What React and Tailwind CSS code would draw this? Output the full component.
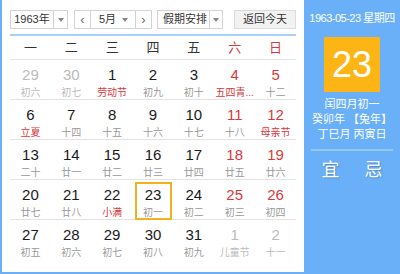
import React from 'react';

const weekdays = ['一', '二', '三', '四', '五', '六', '日'];

// d: day, l: lunar/festival, m: muted (other month), r: red day, f: red festival text
const weeks = [
  [
    { d: 29, l: '初六', m: true },
    { d: 30, l: '初七', m: true },
    { d: 1, l: '劳动节', f: true },
    { d: 2, l: '初九' },
    { d: 3, l: '初十' },
    { d: 4, l: '五四青...', r: true, f: true },
    { d: 5, l: '十二', r: true },
  ],
  [
    { d: 6, l: '立夏', f: true },
    { d: 7, l: '十四' },
    { d: 8, l: '十五' },
    { d: 9, l: '十六' },
    { d: 10, l: '十七' },
    { d: 11, l: '十八', r: true },
    { d: 12, l: '母亲节', r: true, f: true },
  ],
  [
    { d: 13, l: '二十' },
    { d: 14, l: '廿一' },
    { d: 15, l: '廿二' },
    { d: 16, l: '廿三' },
    { d: 17, l: '廿四' },
    { d: 18, l: '廿五', r: true },
    { d: 19, l: '廿六', r: true },
  ],
  [
    { d: 20, l: '廿七' },
    { d: 21, l: '廿八' },
    { d: 22, l: '小满', f: true },
    { d: 23, l: '初一', sel: true },
    { d: 24, l: '初二' },
    { d: 25, l: '初三', r: true },
    { d: 26, l: '初四', r: true },
  ],
  [
    { d: 27, l: '初五' },
    { d: 28, l: '初六' },
    { d: 29, l: '初七' },
    { d: 30, l: '初八' },
    { d: 31, l: '初九' },
    { d: 1, l: '儿童节', m: true },
    { d: 2, l: '十一', m: true },
  ],
];

const Arrow = () => (
  <span className="w-0 h-0 border-x-[3px] border-x-transparent border-t-[4px] border-t-[#888]" />
);

const DayCell = ({ day }) => {
  const numColor = day.m ? 'text-[#bbb]' : day.r ? 'text-[#d9383c]' : 'text-[#1a1a1a]';
  const lunarColor = day.m ? 'text-[#bbb]' : day.f ? 'text-[#d9383c]' : 'text-[#999]';
  return (
    <div className="relative flex flex-col items-center pt-[6px]">
      {day.sel && (
        <div className="absolute left-[2px] right-[1px] top-[2px] bottom-[-1px] border-2 border-[#f5b01e]" />
      )}
      <span className={`text-[15px] leading-[17px] ${numColor}`}>{day.d}</span>
      <span className={`text-[10px] leading-[13px] mt-[3px] whitespace-nowrap ${lunarColor}`}>{day.l}</span>
    </div>
  );
};

export default function App() {
  return (
    <div
      className="flex w-[400px] h-[274px] bg-white overflow-hidden"
      style={{ fontFamily: '"Liberation Sans", "Noto Sans CJK SC", sans-serif' }}
    >
      {/* Calendar area */}
      <div className="w-[304px] h-full border-l-2 border-b-2 border-[#6ab0f9] flex flex-col px-[8px]">
        {/* Controls */}
        <div className="flex items-center h-[19px] mt-[10px] text-[11px] text-[#333] whitespace-nowrap">
          <div className="flex h-full w-[58px] border border-[#d3d3d3] bg-white">
            <span className="w-[42px] flex items-center justify-center">1963年</span>
            <span className="flex-1 flex items-center justify-center border-l border-[#d3d3d3]">
              <Arrow />
            </span>
          </div>
          <div className="flex h-full ml-[6px] w-[78px] border border-[#d3d3d3] bg-white">
            <span className="w-[16px] flex items-center justify-center border-r border-[#d3d3d3] text-[#666] text-[13px]">‹</span>
            <span className="flex-1 flex items-center justify-between pl-[8px] pr-[7px]">
              5月
              <Arrow />
            </span>
            <span className="w-[16px] flex items-center justify-center border-l border-[#d3d3d3] text-[#666] text-[13px]">›</span>
          </div>
          <div className="flex h-full ml-[5px] w-[66px] border border-[#d3d3d3] bg-white">
            <span className="flex-1 flex items-center pl-[5px]">假期安排</span>
            <span className="w-[13px] flex items-center justify-center border-l border-[#d3d3d3]">
              <Arrow />
            </span>
          </div>
          <div className="flex h-full ml-[11px] w-[62px] items-center justify-center border border-[#dcdcdc] bg-[#f2f2f2]">
            返回今天
          </div>
        </div>

        {/* Week header */}
        <div className="mt-[5px] border-t-2 border-[#a9d2f7] grid grid-cols-7 h-[26px] items-center border-b border-b-[#e3e3e3] text-[13px]">
          {weekdays.map((w, i) => (
            <span key={w} className={`text-center ${i >= 5 ? 'text-[#d9383c]' : 'text-[#333]'}`}>{w}</span>
          ))}
        </div>

        {/* Days */}
        <div className="flex flex-col">
          {weeks.map((week, wi) => (
            <div
              key={wi}
              className={`grid grid-cols-7 h-[40px] ${wi < weeks.length - 1 ? 'border-b border-[#e3e3e3]' : ''}`}
            >
              {week.map((day, di) => (
                <DayCell key={di} day={day} />
              ))}
            </div>
          ))}
        </div>
      </div>

      {/* Side panel */}
      <div className="flex-1 h-full bg-[#6ab0f9] flex flex-col items-center text-white">
        <div className="mt-[11px] text-[11px] leading-[14px] tracking-[-0.5px] whitespace-nowrap">1963-05-23 星期四</div>
        <div className="mt-[12px] w-[56px] h-[55px] bg-[#fdb515] flex items-center justify-center text-[36px] leading-none">
          23
        </div>
        <div className="mt-[5px] text-[11px] leading-[15px] flex flex-col items-center whitespace-nowrap">
          <span>闰四月初一</span>
          <span>癸卯年 【兔年】</span>
          <span>丁巳月 丙寅日</span>
        </div>
        <div className="mt-[7px] w-[82px] border-t-2 border-[#93c6fb]" />
        <div className="mt-[8px] flex gap-[25px] text-[18px] leading-[22px] [text-shadow:1px_1px_1px_rgba(0,0,0,0.2)]">
          <span>宜</span>
          <span>忌</span>
        </div>
      </div>
    </div>
  );
}
